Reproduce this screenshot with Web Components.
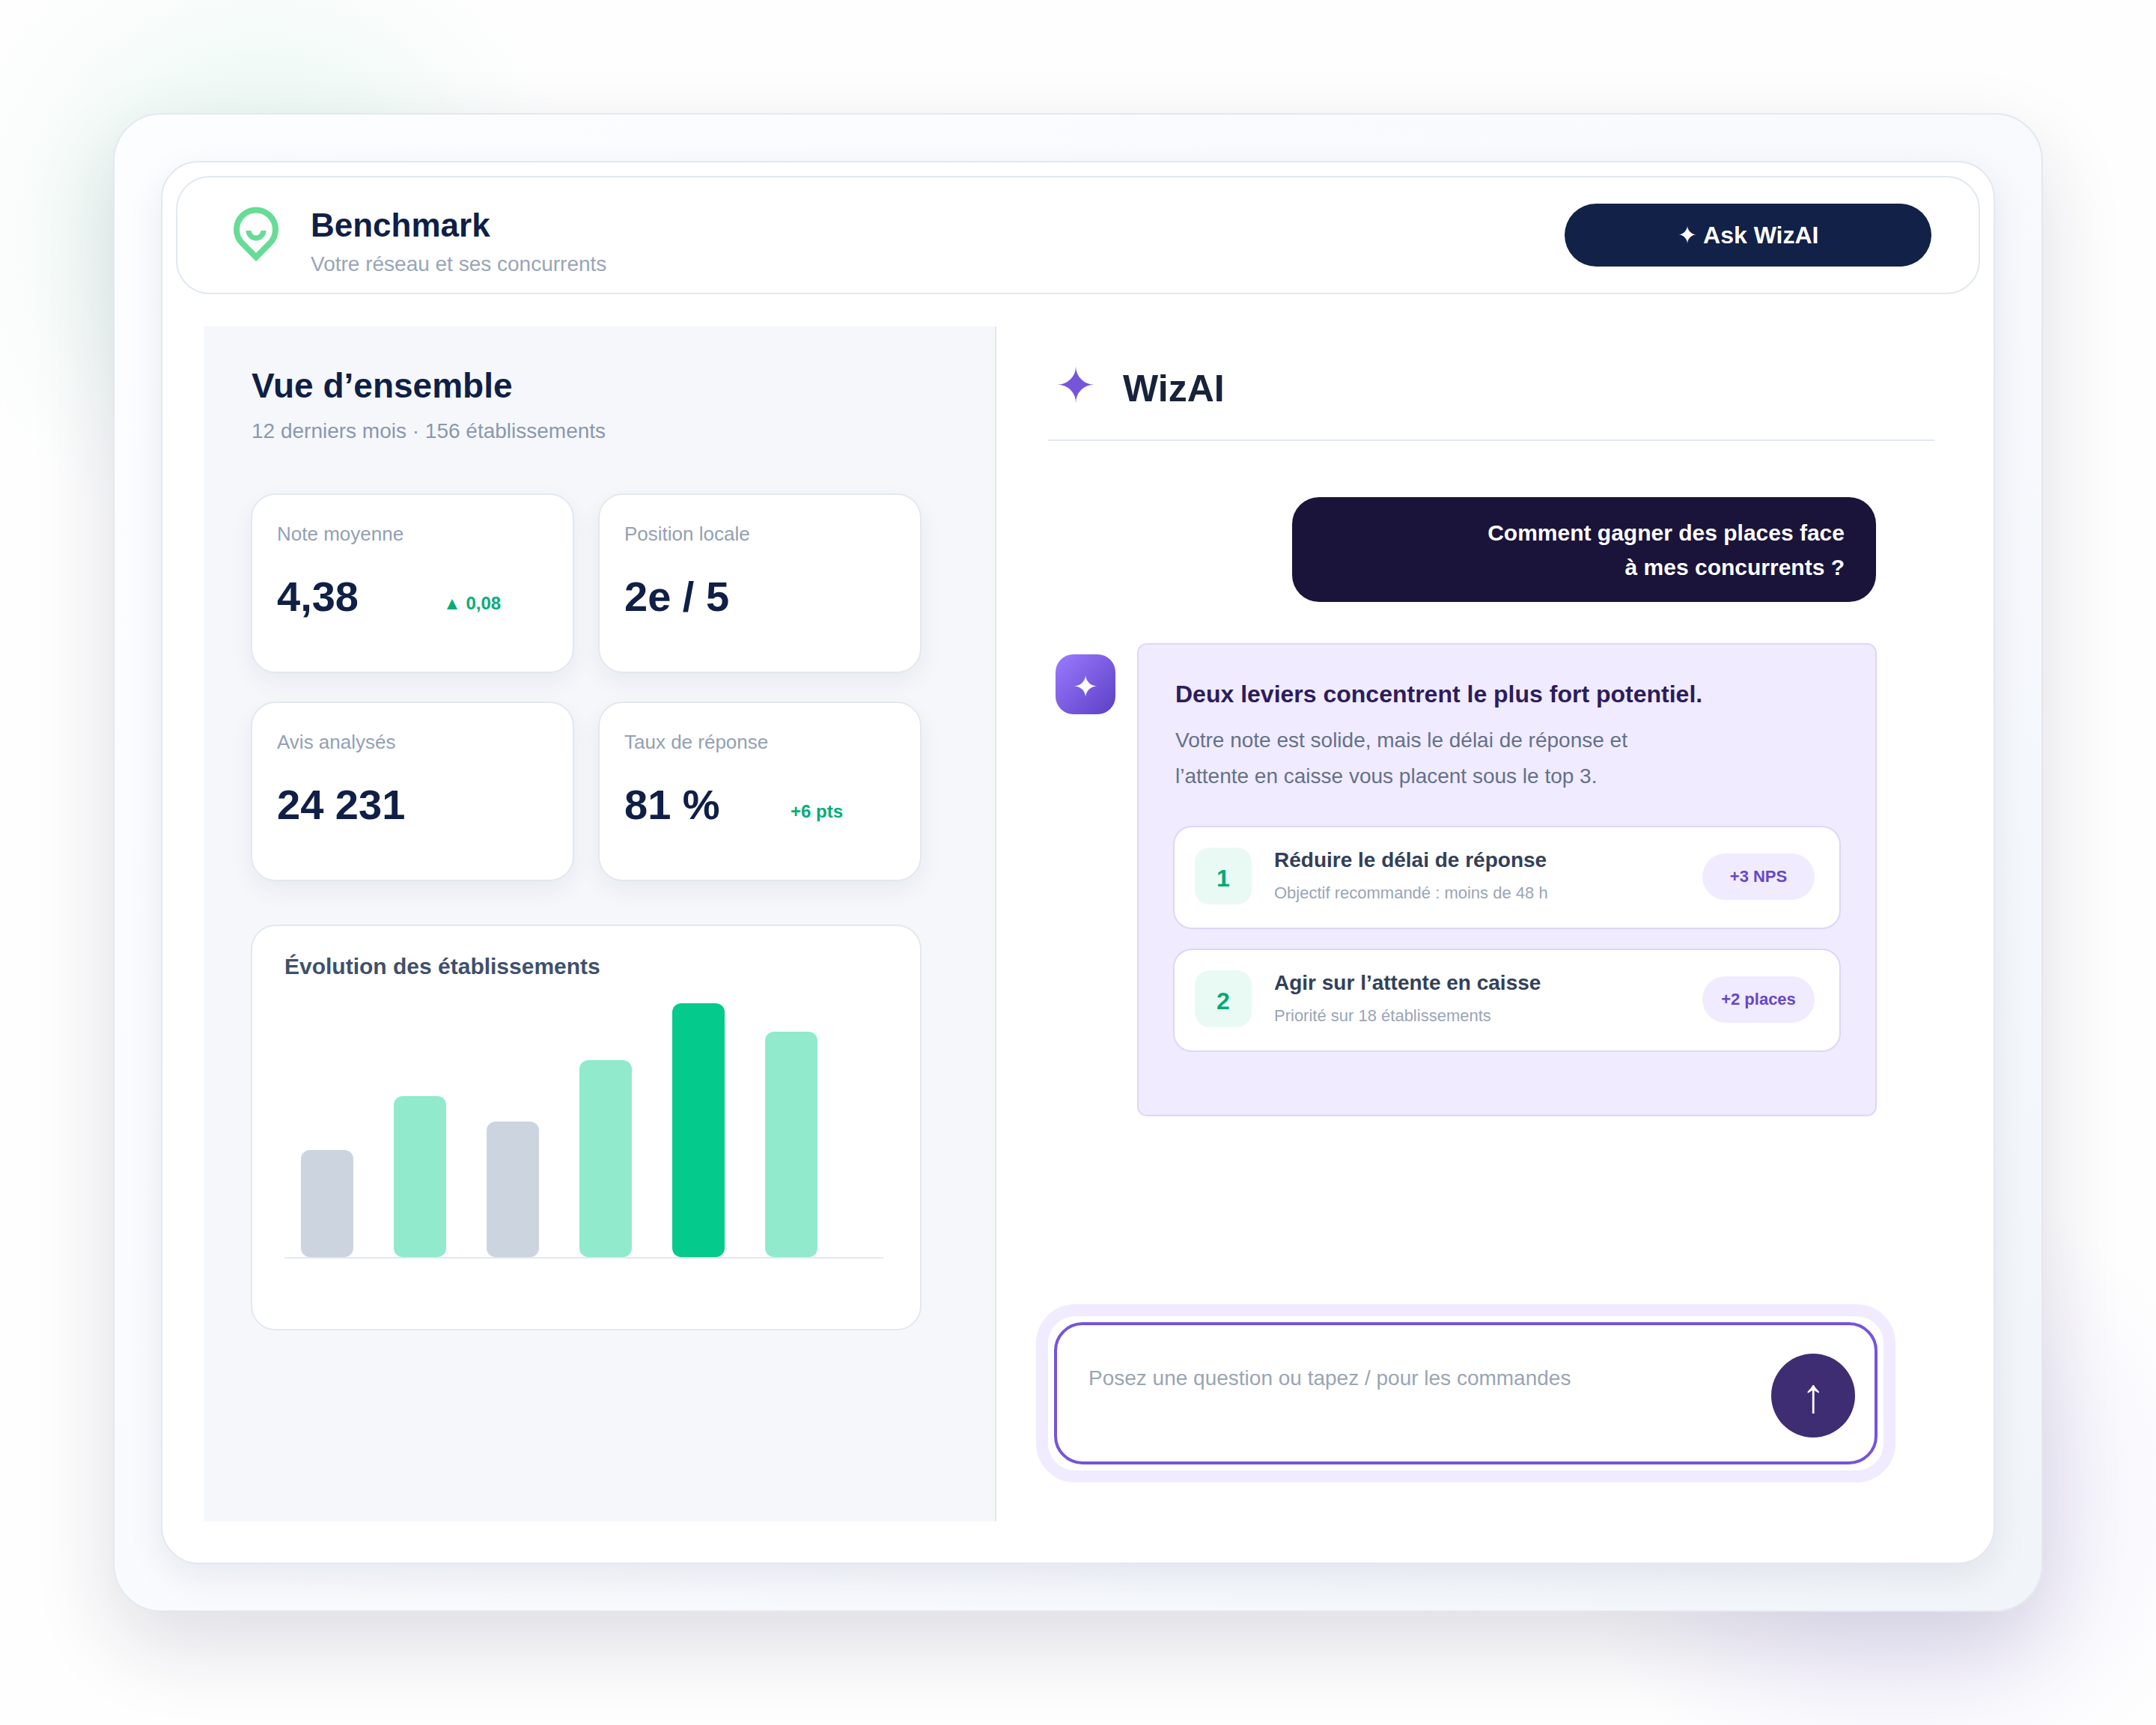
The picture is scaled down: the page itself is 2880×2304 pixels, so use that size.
<!DOCTYPE html>
<html lang="fr">
<head>
<meta charset="UTF-8">
<meta name="viewport" content="width=device-width, initial-scale=1.0">
<title>Benchmark</title>
<style>
  body {
    margin: 0;
    min-height: 100vh;
    box-sizing: border-box;
    padding: 151px;
    display: grid;
    overflow: hidden;
    color: #101f46;
    font-family: "Liberation Sans", Arial, sans-serif;
    background:
      radial-gradient(circle 430px at 350px 310px, rgba(80, 200, 150, 0.14), rgba(80, 200, 150, 0.09) 40%, rgba(80, 200, 150, 0.03) 75%, transparent),
      radial-gradient(circle 440px at 2530px 2000px, rgba(118, 90, 225, 0.14), rgba(118, 90, 225, 0.09) 40%, rgba(118, 90, 225, 0.03) 75%, transparent),
      #fefefe;
  }
</style>
</head>
<body>
  <app-frame>
    <app-header slot="header" heading="Benchmark" subtitle="Votre réseau et ses concurrents"></app-header>
    <overview-panel slot="left">
      <stat-card label="Note moyenne" value="4,38" trend="▲ 0,08"></stat-card>
      <stat-card label="Position locale" value="2e / 5"></stat-card>
      <stat-card label="Avis analysés" value="24 231"></stat-card>
      <stat-card label="Taux de réponse" value="81 %" trend="+6 pts"></stat-card>
      <bar-chart slot="chart" heading="Évolution des établissements"></bar-chart>
    </overview-panel>
    <chat-panel slot="right">
      <user-bubble>Comment gagner des places face<br>à mes concurrents ?</user-bubble>
      <ai-answer>
        <span slot="title">Deux leviers concentrent le plus fort potentiel.</span>
        <span slot="text">Votre note est solide, mais le délai de réponse et<br>l’attente en caisse vous placent sous le top 3.</span>
        <lever-item rank="1" heading="Réduire le délai de réponse" note="Objectif recommandé : moins de 48 h" gain="+3 NPS"></lever-item>
        <lever-item rank="2" heading="Agir sur l’attente en caisse" note="Priorité sur 18 établissements" gain="+2 places"></lever-item>
      </ai-answer>
      <prompt-box slot="prompt"></prompt-box>
    </chat-panel>
  </app-frame>

<script>
// base : monte le rendu dans un shadow root ouvert
class BaseElement extends HTMLElement {
  connectedCallback() {
    if (this.shadowRoot) return;
    this.attachShadow({ mode: 'open' }).innerHTML = this.render();
  }
  attr(name) {
    return this.getAttribute(name) || '';
  }
}

// cadre extérieur + fenêtre
class AppFrame extends BaseElement {
  render() {
    return `
      <style>
        :host {
          display: grid;
          box-sizing: border-box;
          padding: 62px;
          border: 2px solid #e2e8f0;
          border-radius: 64px;
          background: linear-gradient(135deg, #fcfdff, #f8fafe 50%, #f1f5f9);
          box-shadow: 0 44px 110px rgba(26, 20, 62, 0.14);
        }
        .window {
          box-sizing: border-box;
          display: flex;
          flex-direction: column;
          padding: 18px 18px 55px;
          border: 2px solid #e2e8f0;
          border-radius: 50px;
          background: #fff;
          box-shadow: 0 16px 48px rgba(16, 31, 70, 0.08);
        }
        .columns {
          flex: 1;
          display: grid;
          grid-template-columns: 1059px 1fr;
          margin: 43px 37px 0;
        }
      </style>
      <div class="window">
        <slot name="header"></slot>
        <div class="columns">
          <slot name="left"></slot>
          <slot name="right"></slot>
        </div>
      </div>`;
  }
}

class AppHeader extends BaseElement {
  render() {
    return `
      <style>
        :host {
          box-sizing: border-box;
          display: flex;
          align-items: center;
          height: 158px;
          padding: 0 63px 0 73px;
          border: 2px solid #e2e8f0;
          border-radius: 45px;
        }
        svg { width: 64px; height: 76px; margin-right: 41px; }
        .titles { flex: 1; padding-top: 26px; }
        h1 { margin: 0; font-size: 44px; line-height: 52px; }
        p { margin: 0; font-size: 28px; line-height: 52px; color: #9aa5b8; }
        button {
          width: 490px;
          height: 84px;
          border: 0;
          border-radius: 42px;
          background: #122147;
          color: #fff;
          font: bold 32px "Liberation Sans", Arial, sans-serif;
        }
        .spark { font-family: "DejaVu Sans", sans-serif; font-weight: normal; line-height: 32px; }
      </style>
      <svg viewBox="0 0 64 76" fill="none" stroke="#66dc96" stroke-width="8">
        <path d="M32 67.5 L13.5 48.8 A26 26 0 1 1 50.5 48.8 Z"/>
        <path d="M22 32 A10 10 0 0 0 42 32" stroke-width="7"/>
      </svg>
      <div class="titles">
        <h1>${this.attr('heading')}</h1>
        <p>${this.attr('subtitle')}</p>
      </div>
      <button type="button"><span class="spark">✦</span> Ask WizAI</button>`;
  }
}

class OverviewPanel extends BaseElement {
  render() {
    return `
      <style>
        :host {
          box-sizing: border-box;
          display: block;
          padding: 53px 98px 66px 63px;
          border-right: 2px solid #e2e8f0;
          background: #f5f7fb;
        }
        h2 { margin: 0; font-size: 46px; line-height: 52px; }
        p { margin: 0; font-size: 28px; line-height: 44px; padding-top: 13px; color: #8a98ae; }
        h2, p { padding-left: 1px; }
        .stats {
          display: grid;
          grid-template-columns: 1fr 1fr;
          gap: 38px 32px;
          margin: 61px 0 58px;
        }
      </style>
      <h2>Vue d’ensemble</h2>
      <p>12 derniers mois · 156 établissements</p>
      <div class="stats"><slot></slot></div>
      <slot name="chart"></slot>`;
  }
}

class StatCard extends BaseElement {
  render() {
    return `
      <style>
        :host {
          box-sizing: border-box;
          display: block;
          height: 240px;
          padding: 36px 33px;
          border: 2px solid #e2e8f0;
          border-radius: 33px;
          background: #fff;
          box-shadow: 0 12px 32px rgba(16, 31, 70, 0.06);
        }
        .label { font-size: 26px; line-height: 32px; color: #94a0b4; }
        .row {
          display: grid;
          grid-template-columns: 222px 1fr;
          align-items: end;
          margin-top: 36px;
          font-weight: bold;
        }
        .value { font-size: 56px; line-height: 64px; }
        .trend { font-size: 24px; line-height: 46px; color: #06ad79; }
      </style>
      <div class="label">${this.attr('label')}</div>
      <div class="row">
        <span class="value">${this.attr('value')}</span>
        <span class="trend">${this.attr('trend')}</span>
      </div>`;
  }
}

// histogramme
class BarChart extends BaseElement {
  render() {
    const bars = [
      { h: 143, color: '#ccd4e0' },
      { h: 215, color: '#90eacb' },
      { h: 181, color: '#ccd4e0' },
      { h: 263, color: '#90eacb' },
      { h: 339, color: '#04ca8b' },
      { h: 301, color: '#90eacb' }
    ];
    return `
      <style>
        :host {
          box-sizing: border-box;
          display: block;
          height: 542px;
          padding: 36px 49px 0 43px;
          border: 2px solid #e2e8f0;
          border-radius: 33px;
          background: #fff;
        }
        h3 { margin: 0; font-size: 30px; line-height: 36px; color: #40506c; }
        .bars {
          display: flex;
          align-items: flex-end;
          gap: 54px;
          height: 370px;
          padding-left: 22px;
          border-bottom: 2px solid #e2e8f0;
        }
        .bar { width: 70px; border-radius: 12px; }
      </style>
      <h3>${this.attr('heading')}</h3>
      <div class="bars">
        ${bars.map(b => `<div class="bar" style="height:${b.h}px;background:${b.color}"></div>`).join('')}
      </div>`;
  }
}

class ChatPanel extends BaseElement {
  render() {
    return `
      <style>
        :host {
          display: flex;
          flex-direction: column;
          padding: 0 24px 52px 69px;
        }
        header {
          display: flex;
          align-items: center;
          gap: 36px;
          box-sizing: border-box;
          height: 153px;
          padding: 6px 0 0 10px;
          border-bottom: 2px solid #e2e8f0;
        }
        .spark { width: 54px; font: 64px/60px "DejaVu Sans", sans-serif; color: #7654db; text-align: center; }
        h2 { margin: 0; padding-top: 8px; font-size: 50px; line-height: 60px; color: #18223c; }
        .thread {
          flex: 1;
          display: flex;
          flex-direction: column;
          gap: 55px;
          padding: 75px 77px 0 10px;
        }
        .prompt { margin: 0 52px 0 -16px; }
      </style>
      <header><span class="spark">✦</span><h2>WizAI</h2></header>
      <div class="thread"><slot></slot></div>
      <div class="prompt"><slot name="prompt"></slot></div>`;
  }
}

class UserBubble extends BaseElement {
  render() {
    return `
      <style>
        :host {
          box-sizing: border-box;
          display: block;
          align-self: flex-end;
          width: 780px;
          padding: 25px 42px 23px;
          margin-right: 1px;
          border-radius: 36px;
          background: #1a143b;
          color: #fff;
          font-size: 30px;
          font-weight: bold;
          line-height: 46px;
          text-align: right;
        }
      </style>
      <slot></slot>`;
  }
}

class AiAnswer extends BaseElement {
  render() {
    return `
      <style>
        :host { display: flex; gap: 29px; }
        .avatar {
          flex: none;
          width: 80px;
          height: 80px;
          margin-top: 15px;
          border-radius: 24px;
          background: linear-gradient(135deg, #9b7bff, #5b3fc4);
          color: #fff;
          font: 40px/86px "DejaVu Sans", sans-serif;
          text-align: center;
        }
        .card {
          flex: 1;
          box-sizing: border-box;
          padding: 44px 46px 84px;
          border: 2px solid #ddd6fa;
          border-radius: 13px;
          background: #f0ebff;
        }
        .title { padding-left: 3px; font-size: 32px; line-height: 44px; font-weight: bold; color: #2c1d5c; }
        .text { padding: 16px 0 0 3px; font-size: 28px; line-height: 48px; color: #64718a; }
        .items { display: flex; flex-direction: column; gap: 26px; margin-top: 42px; }
      </style>
      <div class="avatar">✦</div>
      <div class="card">
        <div class="title"><slot name="title"></slot></div>
        <div class="text"><slot name="text"></slot></div>
        <div class="items"><slot></slot></div>
      </div>`;
  }
}

class LeverItem extends BaseElement {
  render() {
    return `
      <style>
        :host {
          box-sizing: border-box;
          display: flex;
          align-items: flex-start;
          height: 138px;
          padding: 27px 33px 0 27px;
          border: 2px solid #ddd6fa;
          border-radius: 25px;
          background: #fff;
        }
        .rank {
          width: 76px;
          margin-right: 30px;
          border-radius: 20px;
          background: #e9faf4;
          color: #06a877;
          font-size: 32px;
          font-weight: bold;
          line-height: 82px;
          height: 76px;
          text-align: center;
        }
        .body { flex: 1; }
        .heading { font-size: 28px; font-weight: bold; line-height: 34px; color: #334058; }
        .note { margin-top: 13px; font-size: 22px; line-height: 28px; color: #9aa5b8; }
        .gain {
          width: 150px;
          margin-top: 8px;
          border-radius: 31px;
          background: #f0ebff;
          color: #6747c7;
          font-size: 22px;
          font-weight: bold;
          line-height: 62px;
          text-align: center;
        }
      </style>
      <div class="rank">${this.attr('rank')}</div>
      <div class="body">
        <div class="heading">${this.attr('heading')}</div>
        <div class="note">${this.attr('note')}</div>
      </div>
      <div class="gain">${this.attr('gain')}</div>`;
  }
}

// champ de saisie avec halo
class PromptBox extends BaseElement {
  render() {
    return `
      <style>
        :host {
          display: block;
          padding: 8px;
          border: 16px solid #f0ebff;
          border-radius: 52px;
        }
        form {
          box-sizing: border-box;
          display: flex;
          align-items: flex-start;
          height: 190px;
          padding: 38px 26px 0 42px;
          border: 4px solid #7654db;
          border-radius: 38px;
          background: #fff;
        }
        input {
          flex: 1;
          min-width: 0;
          height: 66px;
          padding: 0;
          border: 0;
          outline: 0;
          background: none;
          color: #101f46;
          font: 28px "Liberation Sans", Arial, sans-serif;
        }
        input::placeholder { color: #9aa5b5; opacity: 1; }
        button {
          width: 112px;
          height: 112px;
          padding: 0;
          border: 0;
          border-radius: 50%;
          background: #3f2d73;
          color: #fff;
          font: 64px "Liberation Sans", Arial, sans-serif;
        }
      </style>
      <form>
        <input type="text" aria-label="Question" placeholder="Posez une question ou tapez / pour les commandes">
        <button type="button" aria-label="Envoyer">↑</button>
      </form>`;
  }
}

customElements.define('app-frame', AppFrame);
customElements.define('app-header', AppHeader);
customElements.define('overview-panel', OverviewPanel);
customElements.define('stat-card', StatCard);
customElements.define('bar-chart', BarChart);
customElements.define('chat-panel', ChatPanel);
customElements.define('user-bubble', UserBubble);
customElements.define('ai-answer', AiAnswer);
customElements.define('lever-item', LeverItem);
customElements.define('prompt-box', PromptBox);
</script>
</body>
</html>
